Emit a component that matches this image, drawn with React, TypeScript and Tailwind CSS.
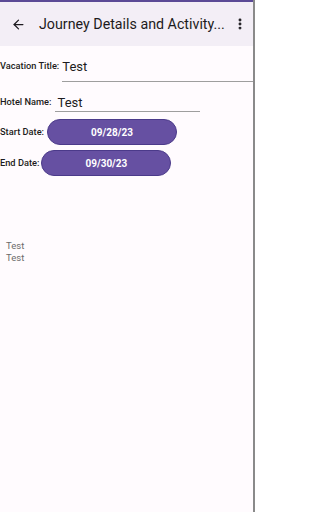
import { ArrowLeft, EllipsisVertical } from "lucide-react";

const font = { fontFamily: "Roboto, 'Noto Sans', sans-serif" };

export default function App() {
  return (
    <div className="w-[255px] h-[512px] bg-[#fffbfe] border-r-2 border-[#8a8a8a] flex flex-col overflow-hidden" style={font}>
      {/* status strip */}
      <div className="h-[2px] bg-[#5b4a96]" />

      {/* app bar */}
      <div className="h-[44px] bg-[#f3eef6] flex items-center pl-[11px] pr-[6px]">
        <ArrowLeft className="w-[15px] h-[15px] text-[#1d1b20] shrink-0" strokeWidth={2} />
        <div className="ml-[13px] flex-1 text-[14.25px] text-[#1d1b20] whitespace-nowrap leading-none">
          Journey Details and Activity...
        </div>
        <EllipsisVertical className="w-[14px] h-[14px] text-[#1d1b20] shrink-0" strokeWidth={3} />
      </div>

      {/* form */}
      <div className="flex flex-col pt-[13px]">
        <div className="flex items-end">
          <span className="text-[9.25px] leading-[12px] font-medium text-[#1d1b20] mb-[10px]">Vacation Title:</span>
          <div className="ml-[3px] flex-1 border-b border-[#9e9e9e] pb-[7px] text-[13px] leading-[15px] text-[#1d1b20]">Test</div>
        </div>

        <div className="flex items-end mt-[13px]">
          <span className="text-[9.25px] leading-[12px] font-medium text-[#1d1b20] mb-[4px]">Hotel Name:</span>
          <div className="ml-[3px] w-[145px] border-b border-[#9e9e9e] pb-[1px] text-[13px] leading-[15px] text-[#1d1b20] pl-[3px]">Test</div>
        </div>

        <div className="flex items-center mt-[7px]">
          <span className="text-[9.25px] leading-[12px] font-medium text-[#1d1b20]">Start Date:</span>
          <button className="ml-[3px] w-[130px] h-[26px] rounded-full bg-[#6650a2] border border-[#4b3a8a] text-white text-[10px] font-bold">
            09/28/23
          </button>
        </div>

        <div className="flex items-center mt-[5px]">
          <span className="text-[9.25px] leading-[12px] font-medium text-[#1d1b20]">End Date:</span>
          <button className="ml-[2px] w-[130px] h-[26px] rounded-full bg-[#6650a2] border border-[#4b3a8a] text-white text-[10px] font-bold">
            09/30/23
          </button>
        </div>
      </div>

      {/* activities */}
      <div className="mt-[64px] pl-[6px] flex flex-col text-[9.5px] text-[#6b6b6b] leading-[12px]">
        <span>Test</span>
        <span>Test</span>
      </div>
    </div>
  );
}
